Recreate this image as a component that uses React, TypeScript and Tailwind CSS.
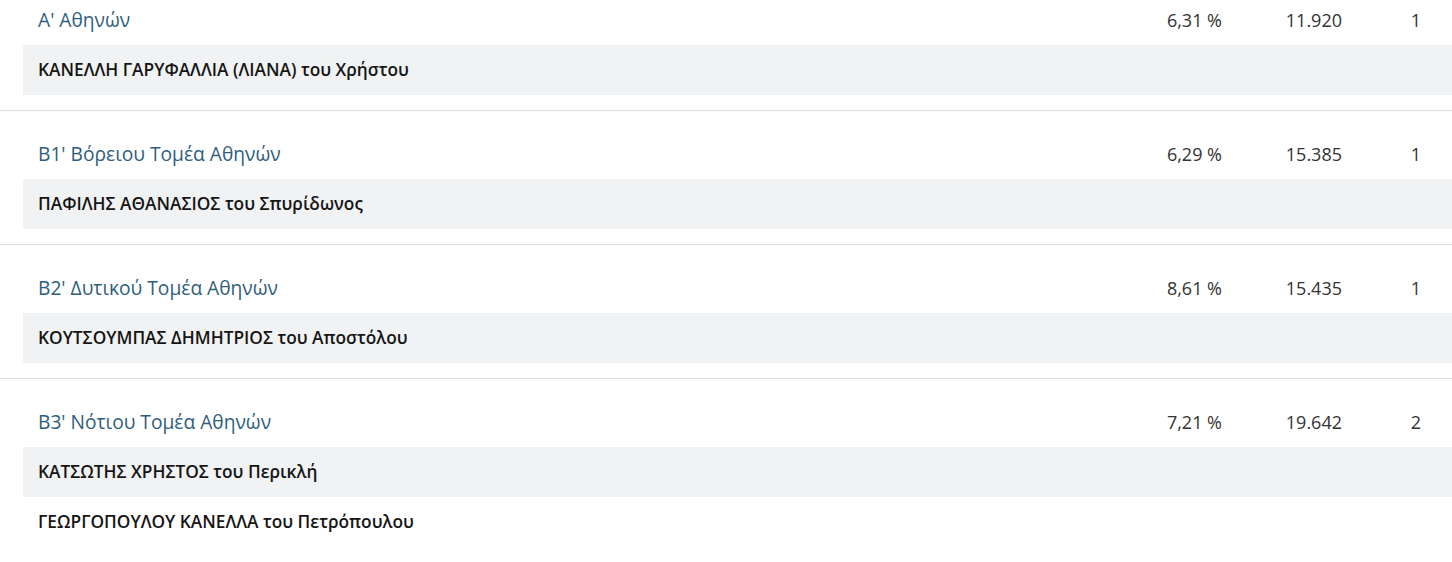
import React from "react";

type Section = {
  name: string;
  pct: string;
  votes: string;
  seats: string;
  people: string[];
};

const sections: Section[] = [
  { name: "Α' Αθηνών", pct: "6,31 %", votes: "11.920", seats: "1", people: ["ΚΑΝΕΛΛΗ ΓΑΡΥΦΑΛΛΙΑ (ΛΙΑΝΑ) του Χρήστου"] },
  { name: "Β1' Βόρειου Τομέα Αθηνών", pct: "6,29 %", votes: "15.385", seats: "1", people: ["ΠΑΦΙΛΗΣ ΑΘΑΝΑΣΙΟΣ του Σπυρίδωνος"] },
  { name: "Β2' Δυτικού Τομέα Αθηνών", pct: "8,61 %", votes: "15.435", seats: "1", people: ["ΚΟΥΤΣΟΥΜΠΑΣ ΔΗΜΗΤΡΙΟΣ του Αποστόλου"] },
  { name: "Β3' Νότιου Τομέα Αθηνών", pct: "7,21 %", votes: "19.642", seats: "2", people: ["ΚΑΤΣΩΤΗΣ ΧΡΗΣΤΟΣ του Περικλή", "ΓΕΩΡΓΟΠΟΥΛΟΥ ΚΑΝΕΛΛΑ του Πετρόπουλου"] },
];

export default function App() {
  return (
    <div className="w-[1452px] h-[562px] overflow-hidden bg-white font-['Open_Sans',sans-serif]">
      <div className="-mt-[23px]">
        {sections.map((s, i) => (
          <div key={i} className={"pt-[18px] " + (i < sections.length - 1 ? "pb-[15px] border-b border-[#dcdcdc]" : "")}>
            <div className="ml-[23px] flex h-[50px] items-center pl-[15px] pr-[31px]">
              <div className="flex-1 text-[19.2px] text-[#2f5e7c]">{s.name}</div>
              <div className="w-[120px] text-right text-[18px] text-[#333]">{s.pct}</div>
              <div className="w-[120px] text-right text-[18px] text-[#333]">{s.votes}</div>
              <div className="w-[79px] text-right text-[18px] text-[#333]">{s.seats}</div>
            </div>
            {s.people.map((p, j) => (
              <div
                key={j}
                className={"ml-[23px] flex h-[50px] items-center pl-[15px] text-[17.3px] font-semibold text-[#151515] " + (j % 2 === 0 ? "bg-[#f1f2f4]" : "bg-white")}
              >
                {p}
              </div>
            ))}
          </div>
        ))}
      </div>
    </div>
  );
}
